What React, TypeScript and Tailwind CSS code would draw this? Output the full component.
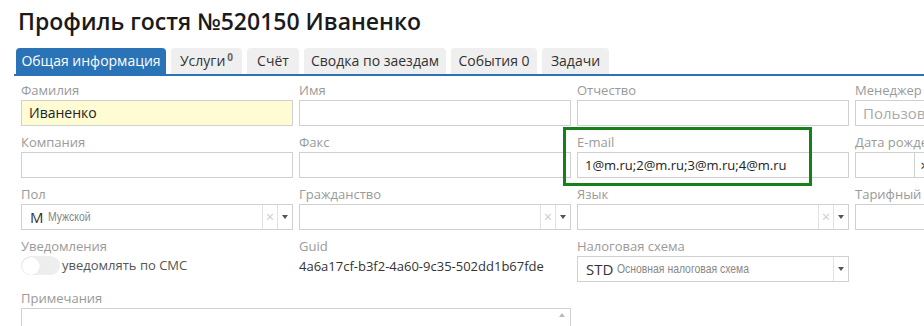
import React from 'react';

const Label = ({ children }: { children: React.ReactNode }) => (
  <div className="h-[20px] text-[13px] leading-[20px] text-[#9a9a9a] whitespace-nowrap">{children}</div>
);

const Input = ({ value, yellow = false, placeholder, small = false }: { value?: string; yellow?: boolean; placeholder?: string; small?: boolean }) => (
  <div
    className={`h-[26px] border border-[#d0d0d0] px-[7px] leading-[24px] whitespace-nowrap overflow-hidden ${
      small ? 'text-[13px]' : 'text-[14px]'
    } ${yellow ? 'bg-[#fffbd3]' : 'bg-white'}`}
  >
    {value ? <span className="text-[#222]">{value}</span> : <span className="text-[#aaa] text-[15px]">{placeholder}</span>}
  </div>
);

const Arrow = () => (
  <div className="w-[0] h-[0] border-l-[3px] border-r-[3px] border-t-[4px] border-l-transparent border-r-transparent border-t-[#555]" />
);

const Select = ({ code, name, clear = true }: { code?: string; name?: string; clear?: boolean }) => (
  <div className="h-[26px] border border-[#d0d0d0] bg-white flex items-stretch">
    <div className="flex-1 flex items-center pl-[8px] gap-[4px] overflow-hidden whitespace-nowrap">
      {code && <span className="text-[15px] text-[#333]">{code}</span>}
      {name && (
        <span className="inline-block origin-left scale-x-[0.8] text-[13px] text-[#888] font-['Liberation_Sans',sans-serif]">
          {name}
        </span>
      )}
    </div>
    {clear && (
      <div className="w-[15px] border-l border-[#e2e2e2] flex items-center justify-center text-[#ccc] text-[14px] leading-none">
        ×
      </div>
    )}
    <div className="w-[15px] border-l border-[#e2e2e2] flex items-center justify-center">
      <Arrow />
    </div>
  </div>
);

const Tab = ({ children, w, active = false }: { children: React.ReactNode; w: string; active?: boolean }) => (
  <div
    className={`h-[26px] rounded-t-[4px] text-[14px] leading-[26px] text-center whitespace-nowrap ${w} ${
      active ? 'bg-[#2b73b7] text-white' : 'bg-[#efefef] text-[#333]'
    }`}
  >
    {children}
  </div>
);

export default function App() {
  return (
    <div className="relative w-[924px] h-[326px] overflow-hidden bg-white font-['Open_Sans',sans-serif]">
      <h1 className="pl-[18px] pt-[5px] text-[23px] leading-[32px] font-semibold text-[#1a1a1a] whitespace-nowrap">
        Профиль гостя №520150 Иваненко
      </h1>

      {/* Tabs */}
      <div className="ml-[14px] mt-[11px] pl-[2px] flex gap-[5px] border-b-2 border-[#2b73b7]">
        <Tab w="w-[150px]" active>
          Общая информация
        </Tab>
        <Tab w="w-[71px]">
          Услуги<sup className="text-[10px] font-bold text-[#666] ml-[2px]">0</sup>
        </Tab>
        <Tab w="w-[52px]">Счёт</Tab>
        <Tab w="w-[142px]">Сводка по заездам</Tab>
        <Tab w="w-[86px]">События 0</Tab>
        <Tab w="w-[67px]">Задачи</Tab>
      </div>

      {/* Form */}
      <div className="pl-[21px] pt-[4px] grid grid-cols-[272px_272px_272px_272px] gap-x-[6px] gap-y-[6px]">
        <div>
          <Label>Фамилия</Label>
          <Input value="Иваненко" yellow />
        </div>
        <div>
          <Label>Имя</Label>
          <Input />
        </div>
        <div>
          <Label>Отчество</Label>
          <Input />
        </div>
        <div>
          <Label>Менеджер</Label>
          <Input placeholder="Пользователь" />
        </div>

        <div>
          <Label>Компания</Label>
          <Input />
        </div>
        <div>
          <Label>Факс</Label>
          <Input />
        </div>
        <div>
          <Label>E-mail</Label>
          <Input value="1@m.ru;2@m.ru;3@m.ru;4@m.ru" small />
        </div>
        <div>
          <Label>Дата рождения</Label>
          <div className="h-[26px] w-[140px] border border-[#d0d0d0] bg-white flex">
            <div className="w-[58px]" />
            <div className="w-[20px] border-l border-[#d0d0d0] flex items-center justify-center text-[15px] text-[#333] leading-none">
              ×
            </div>
            <div className="flex-1 border-l border-[#d0d0d0]" />
          </div>
        </div>

        <div>
          <Label>Пол</Label>
          <Select code="M" name="Мужской" />
        </div>
        <div>
          <Label>Гражданство</Label>
          <Select />
        </div>
        <div>
          <Label>Язык</Label>
          <Select />
        </div>
        <div>
          <Label>Тарифный план</Label>
          <Select />
        </div>

        <div>
          <Label>Уведомления</Label>
          <div className="h-[26px] flex items-start gap-[2px]">
            <div className="w-[39px] h-[19px] rounded-full bg-[#eeeeee] flex items-center pl-[1px]">
              <div className="w-[18px] h-[18px] rounded-full bg-white shadow-[0_0_1px_rgba(0,0,0,0.15)]" />
            </div>
            <span className="text-[13px] leading-[19px] text-[#555]">уведомлять по СМС</span>
          </div>
        </div>
        <div>
          <Label>Guid</Label>
          <div className="text-[13px] leading-[20px] text-[#333] whitespace-nowrap">4a6a17cf-b3f2-4a60-9c35-502dd1b67fde</div>
        </div>
        <div>
          <Label>Налоговая схема</Label>
          <Select code="STD" name="Основная налоговая схема" clear={false} />
        </div>
        <div />

        <div className="col-span-2">
          <Label>Примечания</Label>
          <div className="h-[60px] border border-[#d0d0d0] bg-white flex justify-end pr-[5px] pt-[4px]">
            <div className="w-[0] h-[0] border-l-[3px] border-r-[3px] border-b-[4px] border-l-transparent border-r-transparent border-b-[#bbb]" />
          </div>
        </div>
      </div>

      {/* highlight frame around e-mail */}
      <div className="absolute left-[563px] top-[127px] w-[249px] h-[59px] border-[3px] border-[#16801a]" />
    </div>
  );
}
